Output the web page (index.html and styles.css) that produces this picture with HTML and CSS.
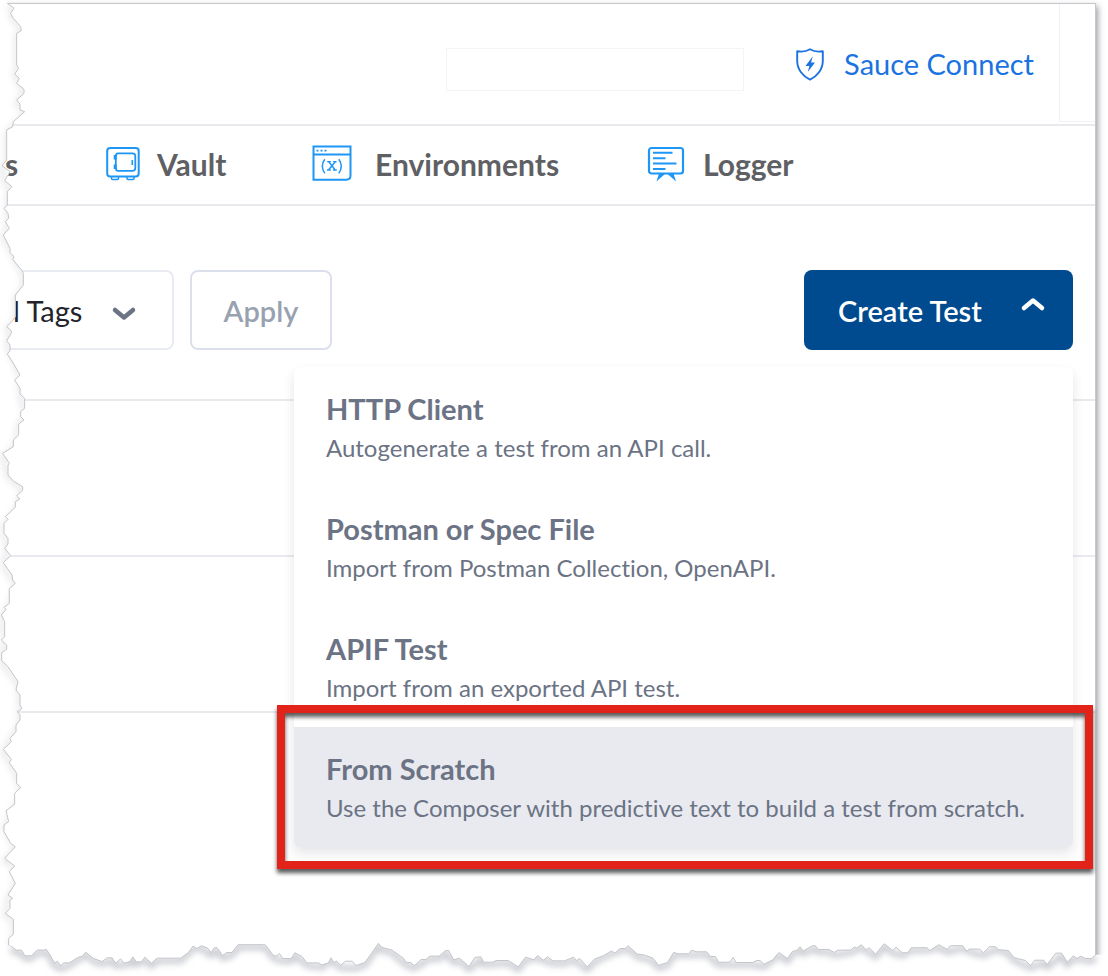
FILE: index.html
```html
<!DOCTYPE html>
<html lang="en">
<head>
<meta charset="utf-8">
<meta name="viewport" content="width=device-width, initial-scale=1">
<title>Create Test</title>
<link rel="stylesheet" href="styles.css">
</head>
<body>
<div class="sheet">
  <main class="paper">
    <header class="header">
      <input class="header-search" type="text" aria-label="Search">
      <a class="connect" href="#">
        <svg class="connect-icon" viewBox="0 0 28 33" aria-hidden="true">
          <path d="M1.2 3.2Q8.500 4.600 14 1.300Q19.500 4.600 26.800 3.200V13C26.800 21 21.500 28 14 31.600C6.500 28 1.200 21 1.200 13Z" fill="none" stroke="currentColor" stroke-width="1.900" stroke-linejoin="round"/>
          <path d="M16.800 8.200L9.500 18H13.400L11.800 24L19 14.600H15Z" fill="currentColor"/>
        </svg>
        <span>Sauce Connect</span>
      </a>
      <div class="header-end"></div>
    </header>

    <nav class="tabs" aria-label="Project">
      <a class="tab" href="#">s</a>
      <a class="tab" href="#">
        <svg class="tab-icon" viewBox="0 0 40 40" fill="none" stroke="currentColor" stroke-width="2" aria-hidden="true">
          <rect x="4.200" y="5" width="31.500" height="28.500" rx="3"/>
          <path d="M15 10.300H29.500Q32.300 10.300 32.300 13V25Q32.300 27.800 29.500 27.800H15Q12.800 27.800 12.800 25V13Q12.800 10.300 15 10.300Z" stroke-width="1.800"/>
          <path d="M12.200 12V16.500M12.200 21.500V26" stroke-width="3"/>
          <path d="M29.300 17V22" stroke-width="1.600"/>
          <path d="M8.500 34V35.500Q8.500 36.500 9.500 36.500H14.500Q15.500 36.500 15.500 35.500V34M24 34V35.500Q24 36.500 25 36.500H30Q31 36.500 31 35.500V34" stroke-width="1.500"/>
        </svg>
        <span>Vault</span>
      </a>
      <a class="tab tab-wide" href="#">
        <svg class="tab-icon" viewBox="0 0 40 40" fill="none" stroke="currentColor" stroke-width="2" aria-hidden="true">
          <path d="M1.500 3.500H38.500V32.500Q38.500 36.700 34.300 36.700H1.500ZM1.500 11.500H38.500"/>
          <path d="M4.500 7.600H6.500M8.500 7.600H10.500M12.500 7.600H14.500" stroke-width="1.800"/>
          <path d="M12.800 16.200Q7.800 23 12.800 30.200M26.800 16.200Q31.800 23 26.800 30.200" stroke-width="1.500"/>
          <path d="M16.800 18.800L23 26.800M23.300 18.800L16.600 26.800" stroke-width="1.500"/>
          <path d="M15.200 18.600H18.800M21.200 18.600H24.600M15 27H18.800M21 27H24.800" stroke-width="1.300"/>
        </svg>
        <span>Environments</span>
      </a>
      <a class="tab tab-medium" href="#">
        <svg class="tab-icon" viewBox="0 0 40 40" fill="none" stroke="currentColor" stroke-width="2.200" aria-hidden="true">
          <rect x="4" y="5" width="34" height="25.500" rx="2.500"/>
          <path d="M8 9.800H27.500M8 15.300H20.500M8 20.600H31.500M8 26H20.500" stroke-width="2"/>
          <path d="M14 30.500H20.500L16.500 34L11.500 38.500ZM22 30.500H28.500L31 38.500L26 34Z" fill="currentColor" stroke="none"/>
        </svg>
        <span>Logger</span>
      </a>
    </nav>

    <section class="toolbar" aria-label="Filters">
      <div class="tags">
        <select class="tags-select" aria-label="Tags"><option>l Tags</option></select>
        <svg class="tags-chevron" viewBox="0 0 26 16" aria-hidden="true"><path d="M4 4L13 11.500L22 4" fill="none" stroke="currentColor" stroke-width="4.500" stroke-linecap="round" stroke-linejoin="round"/></svg>
      </div>
      <button class="apply" type="button">Apply</button>
      <div class="create-wrap">
        <button class="create" type="button" aria-haspopup="menu" aria-expanded="true">
          <span>Create Test</span>
          <svg class="create-chevron" viewBox="0 0 26 16" aria-hidden="true"><path d="M4 12L13 4.500L22 12" fill="none" stroke="currentColor" stroke-width="4.500" stroke-linecap="round" stroke-linejoin="round"/></svg>
        </button>
        <div class="menu" role="menu">
          <button class="item" type="button" role="menuitem"><span class="item-title">HTTP Client</span><span class="item-text">Autogenerate a test from an API call.</span></button>
          <button class="item" type="button" role="menuitem"><span class="item-title">Postman or Spec File</span><span class="item-text">Import from Postman Collection, OpenAPI.</span></button>
          <button class="item" type="button" role="menuitem"><span class="item-title">APIF Test</span><span class="item-text">Import from an exported API test.</span></button>
          <button class="item item-active" type="button" role="menuitem"><span class="item-title">From Scratch</span><span class="item-text">Use the Composer with predictive text to build a test from scratch.</span></button>
        </div>
      </div>
    </section>

    <div class="rows">
      <div class="row"></div>
      <div class="row"></div>
      <div class="row row-last"></div>
    </div>
  </main>

  <svg class="tear tear-left" viewBox="0 0 90 2928" preserveAspectRatio="none" aria-hidden="true">
    <defs>
      <clipPath id="left-clip"><path d="M0 0H22V10L42 24L32 40L40 55L62 80L64 92L50 100V195L56 205L44 222L58 235L50 250L72 268V280L50 300L60 312V330L74 335L40 365L38 380L20 390V480L6 497L30 515L14 542L36 560L22 575V615L12 625L24 640L26 655L16 665L28 685L10 705L30 745V758L42 770L38 778L66 812L70 820V855L46 885V950L40 960L20 980L34 992V1000L20 1022L30 1035V1052L22 1062L40 1090L60 1125L44 1140L60 1165V1182L74 1195V1225L62 1235V1250L72 1260L56 1272V1305L40 1320V1340L8 1360L28 1390L24 1395V1425L40 1443L68 1460V1470L50 1488L60 1497L46 1505V1522L16 1550L24 1558L12 1570V1600L24 1615V1632L14 1645L32 1667L10 1688L22 1705L36 1725L38 1740L46 1750L28 1766V1810L12 1822L18 1828L4 1845L14 1865V1910L4 1920L20 1935V1948L5 1958V1982L24 2000L54 2045L48 2070L60 2085V2115L66 2126L52 2135L60 2145V2160L48 2175V2195L30 2215L34 2225L10 2248L34 2278L28 2288L50 2320V2350L62 2363L44 2380V2413L18 2432L26 2465L12 2475V2495L32 2530L46 2540L14 2575L44 2598L28 2615L46 2650L24 2685L38 2695L30 2700V2725L16 2740L40 2758V2803L26 2815V2835L40 2860V2928H0Z"/></clipPath>
      <filter id="soft" x="-200%" y="-10%" width="500%" height="120%"><feGaussianBlur stdDeviation="9"/></filter>
    </defs>
    <g clip-path="url(#left-clip)">
      <path class="tear-fill" d="M0 0H90V2928H0Z"/>
      <path class="tear-shade" filter="url(#soft)" transform="translate(0 8)" d="M22 10L42 24L32 40L62 80L50 100V195L44 222L72 268L50 300L74 335L20 390V480L6 497L14 542L36 560L22 575V615L26 655L10 705L30 745L66 812L70 855L46 885V950L20 980L34 1000L20 1022L30 1052L60 1125L60 1182L74 1225L56 1272L40 1340L8 1360L24 1425L68 1460L46 1522L12 1570V1600L24 1632L10 1688L46 1750L28 1810L4 1845L14 1910L5 1982L54 2045L60 2115V2160L10 2248L50 2320L62 2363L44 2413L12 2475L46 2540L14 2575L44 2598L46 2650L24 2685L16 2740L40 2758V2803L26 2835"/>
    </g>
    <path class="tear-line" d="M22 10L42 24L32 40L40 55L62 80L64 92L50 100V195L56 205L44 222L58 235L50 250L72 268V280L50 300L60 312V330L74 335L40 365L38 380L20 390V480L6 497L30 515L14 542L36 560L22 575V615L12 625L24 640L26 655L16 665L28 685L10 705L30 745V758L42 770L38 778L66 812L70 820V855L46 885V950L40 960L20 980L34 992V1000L20 1022L30 1035V1052L22 1062L40 1090L60 1125L44 1140L60 1165V1182L74 1195V1225L62 1235V1250L72 1260L56 1272V1305L40 1320V1340L8 1360L28 1390L24 1395V1425L40 1443L68 1460V1470L50 1488L60 1497L46 1505V1522L16 1550L24 1558L12 1570V1600L24 1615V1632L14 1645L32 1667L10 1688L22 1705L36 1725L38 1740L46 1750L28 1766V1810L12 1822L18 1828L4 1845L14 1865V1910L4 1920L20 1935V1948L5 1958V1982L24 2000L54 2045L48 2070L60 2085V2115L66 2126L52 2135L60 2145V2160L48 2175V2195L30 2215L34 2225L10 2248L34 2278L28 2288L50 2320V2350L62 2363L44 2380V2413L18 2432L26 2465L12 2475V2495L32 2530L46 2540L14 2575L44 2598L28 2615L46 2650L24 2685L38 2695L30 2700V2725L16 2740L40 2758V2803L26 2815V2835L40 2860"/>
  </svg>

  <svg class="tear tear-bottom" viewBox="0 0 3104 226" preserveAspectRatio="none" aria-hidden="true">
    <defs>
      <clipPath id="bottom-clip"><path d="M0 136H30L45 149H60L70 166H88L104 149H122L130 147L140 163L153 188L161 182L171 196L178 187H194L220 170L230 168L240 155L262 174L286 183L300 172H314L324 188L338 175L347 188L364 183L372 169L382 184H396L406 170L424 188L440 173H506L528 156L541 137L551 144L565 136L583 144L591 157L600 142H608L624 165L635 156H650L667 133H743L767 166H775L783 159L792 174H816L826 157L846 168L860 187H892L902 193L920 187L927 172L936 187L942 181L954 194L968 182H987L997 195L1022 186L1040 160L1060 129L1070 141L1098 149L1130 173L1138 186H1150L1161 195L1180 177H1193L1204 167H1230L1249 150H1257L1271 178L1287 173L1314 198L1330 171L1347 169L1355 185H1380L1390 180H1424L1452 199L1472 170L1496 178L1506 165L1522 179L1534 169L1549 181H1581L1607 170L1615 180L1624 174L1645 199L1665 176L1690 166L1713 152L1723 158L1736 145L1752 144L1760 136L1785 161L1802 163L1828 172L1845 194L1870 186L1887 156L1900 160H1929L1938 149L1950 154H1980L1990 168H2004L2013 185H2044L2054 171L2062 186H2108L2120 180H2130L2140 191L2165 178L2182 156L2206 174L2220 153L2232 150L2241 139L2250 152L2276 136H2284L2292 147H2322L2337 156L2347 149H2384L2393 140L2400 143L2413 133L2426 148L2435 142L2453 161L2477 130L2501 150L2510 140L2528 157H2543L2553 142L2597 142L2605 150L2630 133L2654 147L2662 136H2697L2708 152L2716 146H2744L2755 157L2772 139H2789L2797 148L2825 150L2840 171L2873 180L2887 195L2899 179H2924L2933 192L2958 158H2974L2990 185L3007 166L3017 174L3028 167L3040 174H3058L3070 163H3104V226H0Z"/></clipPath>
      <filter id="soft-low" x="-5%" y="-100%" width="110%" height="300%"><feGaussianBlur stdDeviation="9"/></filter>
    </defs>
    <g clip-path="url(#bottom-clip)">
      <path class="tear-fill" d="M0 0H3104V226H0Z"/>
      <path class="tear-cast" filter="url(#soft-low)" transform="translate(0 8)" d="M30 136L45 149H60L70 166H88L104 149H122L130 147L140 163L153 188L171 196L194 187L240 155L262 174L286 183L314 172L324 188L364 183L372 169L382 184L406 170L424 188L440 173H506L541 137L565 136L591 157L608 142L624 165L650 156L667 133H743L767 166L792 174H816L826 157L860 187L902 193L927 172L954 194L997 195L1022 186L1060 129L1070 141L1098 149L1138 186L1161 195L1204 167H1230L1249 150L1271 178L1287 173L1314 198L1347 169L1355 185L1424 180L1452 199L1472 170L1506 165L1549 181H1581L1607 170L1645 199L1665 176L1713 152L1760 136L1785 161L1828 172L1845 194L1870 186L1887 156H1929L1980 154L2013 185H2108L2140 191L2182 156L2206 174L2220 153L2241 139L2250 152L2284 136L2292 147H2322L2337 156L2384 149L2413 133L2453 161L2477 130L2501 150L2528 157L2553 142L2597 142L2630 133L2654 147L2697 136L2716 146L2755 157L2789 139L2825 150L2840 171L2887 195L2924 179L2933 192L2974 158L2990 185L3007 166L3058 174L3070 163"/>
    </g>
    <path class="tear-line" d="M30 136L45 149H60L70 166H88L104 149H122L130 147L140 163L153 188L161 182L171 196L178 187H194L220 170L230 168L240 155L262 174L286 183L300 172H314L324 188L338 175L347 188L364 183L372 169L382 184H396L406 170L424 188L440 173H506L528 156L541 137L551 144L565 136L583 144L591 157L600 142H608L624 165L635 156H650L667 133H743L767 166H775L783 159L792 174H816L826 157L846 168L860 187H892L902 193L920 187L927 172L936 187L942 181L954 194L968 182H987L997 195L1022 186L1040 160L1060 129L1070 141L1098 149L1130 173L1138 186H1150L1161 195L1180 177H1193L1204 167H1230L1249 150H1257L1271 178L1287 173L1314 198L1330 171L1347 169L1355 185H1380L1390 180H1424L1452 199L1472 170L1496 178L1506 165L1522 179L1534 169L1549 181H1581L1607 170L1615 180L1624 174L1645 199L1665 176L1690 166L1713 152L1723 158L1736 145L1752 144L1760 136L1785 161L1802 163L1828 172L1845 194L1870 186L1887 156L1900 160H1929L1938 149L1950 154H1980L1990 168H2004L2013 185H2044L2054 171L2062 186H2108L2120 180H2130L2140 191L2165 178L2182 156L2206 174L2220 153L2232 150L2241 139L2250 152L2276 136H2284L2292 147H2322L2337 156L2347 149H2384L2393 140L2400 143L2413 133L2426 148L2435 142L2453 161L2477 130L2501 150L2510 140L2528 157H2543L2553 142L2597 142L2605 150L2630 133L2654 147L2662 136H2697L2708 152L2716 146H2744L2755 157L2772 139H2789L2797 148L2825 150L2840 171L2873 180L2887 195L2899 179H2924L2933 192L2958 158H2974L2990 185L3007 166L3017 174L3028 167L3040 174H3058L3070 163"/>
  </svg>
</div>
</body>
</html>
```
FILE: styles.css
```css
* { box-sizing: border-box; }

body {
  margin: 0;
  background: #fff;
  font-family: Lato, "Open Sans", sans-serif;
  font-variant-ligatures: none;
}

button, input, select { font: inherit; }

.sheet {
  position: relative;
  padding: 3px 12px 0 0;
}

.paper {
  min-height: calc(100vh - 3px);
  background: #fff;
  border-top: 1px solid #c6c8cb;
  border-right: 1px solid #c6c8cb;
  box-shadow: 2px 3px 6px rgba(60, 64, 75, 0.5);
}

.header {
  display: flex;
  justify-content: flex-end;
  align-items: center;
  height: 122px;
  border-bottom: 2px solid #e9e9ee;
}

.header-search {
  width: 298px;
  height: 43px;
  margin-top: 11px;
  margin-right: 52px;
  border: 1px solid #f4f4f6;
  background: #fff;
}

.connect {
  display: flex;
  align-items: center;
  gap: 20px;
  margin-right: 25px;
  color: #1a73e0;
  font-size: 29px;
  line-height: 36px;
  text-decoration: none;
}

.connect-icon { width: 28px; height: 33px; }

.header-end {
  align-self: stretch;
  width: 36px;
  margin-bottom: 2px;
  border-left: 1px solid #f1f1f3;
  border-bottom: 1px solid #f1f1f3;
}

.tabs {
  display: grid;
  grid-template-columns: 98px 209px 333px auto;
  align-items: center;
  height: 80px;
  padding: 0 0 2px 5px;
  border-bottom: 2px solid #e9e9ee;
}

.tab {
  display: flex;
  align-items: center;
  gap: 14px;
  color: #5f6064;
  font-size: 30px;
  font-weight: 700;
  line-height: 36px;
  text-decoration: none;
}

.tab-medium { gap: 18px; }

.tab-wide { gap: 23px; }

.tab-icon {
  width: 40px;
  height: 40px;
  margin-bottom: 2px;
  color: #1e96f5;
}

.toolbar {
  display: flex;
  gap: 16px;
  padding: 64px 22px 49px 0;
}

.tags {
  position: relative;
  width: 174px;
}

.tags-select {
  width: 100%;
  height: 80px;
  padding: 0 60px 0 13px;
  appearance: none;
  border: 2px solid #e9ebf3;
  border-left: 0;
  border-radius: 0 8px 8px 0;
  background: #fff;
  color: #22232b;
  font-size: 29px;
}

.tags-chevron {
  position: absolute;
  top: 36px;
  right: 37px;
  width: 26px;
  height: 16px;
  color: #6b7384;
  pointer-events: none;
}

.apply {
  width: 142px;
  height: 80px;
  border: 2px solid #dce0ec;
  border-radius: 8px;
  background: #fff;
  color: #98a1b0;
  font-size: 29px;
  font-weight: 600;
}

.create-wrap {
  position: relative;
  margin-left: auto;
}

.create {
  display: flex;
  align-items: center;
  justify-content: space-between;
  width: 269px;
  height: 80px;
  padding: 0 27px 0 34px;
  border: 0;
  border-radius: 8px;
  background: #004b8f;
  color: #fff;
  font-size: 29px;
  font-weight: 600;
}

.create-chevron { width: 26px; height: 16px; margin-bottom: 12px; }

.menu {
  position: absolute;
  top: 97px;
  right: 0;
  width: 779px;
  border-radius: 6px;
  background: #fff;
  box-shadow: 0 6px 12px rgba(40, 45, 65, 0.12);
}

.item {
  position: relative;
  display: flex;
  flex-direction: column;
  gap: 9px;
  width: 100%;
  padding: 27px 32px 24px;
  border: 0;
  background: none;
  color: #6b7384;
  text-align: left;
  white-space: nowrap;
}

.item-title {
  font-size: 29px;
  font-weight: 700;
  line-height: 30px;
}

.item-text {
  font-size: 24px;
  line-height: 30px;
}

.item-active {
  border-radius: 0 0 6px 6px;
  background: #e8eaf0;
}

.item-active::after {
  content: "";
  position: absolute;
  inset: -22px -20px -22px -17px;
  border: 8px solid #e2231a;
  filter: drop-shadow(0 4px 2px rgba(0, 0, 0, 0.65));
}

.rows { border-top: 2px solid #e9e9ee; }

.row {
  height: 156px;
  border-bottom: 2px solid #e9e9ee;
}

.row-last { border-bottom: 0; }

.tear {
  position: absolute;
  left: 0;
  pointer-events: none;
}

.tear-left { top: 0; width: 30px; height: 100%; }

.tear-bottom { bottom: 0; width: 100%; height: 76px; }

.tear-fill { fill: #fff; }

.tear-line {
  fill: none;
  stroke: #c3c5c9;
  stroke-width: 1px;
  vector-effect: non-scaling-stroke;
}

.tear-shade { fill: none; stroke: #c4c7cd; stroke-width: 8; opacity: 0.7; }

.tear-cast { fill: none; stroke: #a2a6b0; stroke-width: 14; opacity: 0.7; }
```
